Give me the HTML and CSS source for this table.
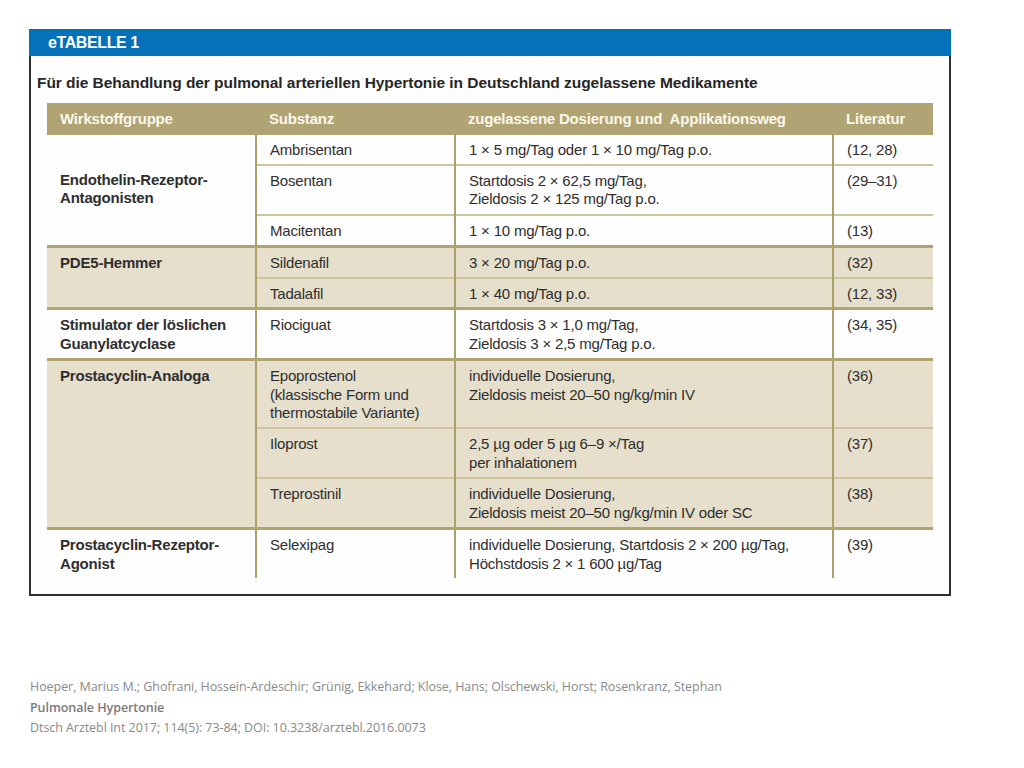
FILE: index.html
```html
<!DOCTYPE html>
<html lang="de">
<head>
<meta charset="utf-8">
<title>eTABELLE 1</title>
<link rel="stylesheet" href="styles.css">
</head>
<body>
<div class="page">
  <div class="frame">
    <div class="band">eTABELLE 1</div>
    <div class="box">
      <h1 class="title">Für die Behandlung der pulmonal arteriellen Hypertonie in Deutschland zugelassene Medikamente</h1>
      <table class="tbl">
        <colgroup>
          <col class="c1"><col class="c2"><col class="c3"><col class="c4">
        </colgroup>
        <thead>
          <tr>
            <th>Wirkstoffgruppe</th>
            <th>Substanz</th>
            <th>zugelassene Dosierung und&nbsp; Applikationsweg</th>
            <th>Literatur</th>
          </tr>
        </thead>
        <tbody class="grp white">
          <tr>
            <td class="group mid" rowspan="3">Endothelin-Rezeptor-<br>Antagonisten</td>
            <td>Ambrisentan</td>
            <td>1 × 5 mg/Tag oder 1 × 10 mg/Tag p.o.</td>
            <td>(12, 28)</td>
          </tr>
          <tr class="h2">
            <td>Bosentan</td>
            <td>Startdosis 2 × 62,5 mg/Tag,<br>Zieldosis 2 × 125 mg/Tag p.o.</td>
            <td>(29–31)</td>
          </tr>
          <tr class="loose">
            <td>Macitentan</td>
            <td>1 × 10 mg/Tag p.o.</td>
            <td>(13)</td>
          </tr>
        </tbody>
        <tbody class="grp beige">
          <tr>
            <td class="group" rowspan="2">PDE5-Hemmer</td>
            <td>Sildenafil</td>
            <td>3 × 20 mg/Tag p.o.</td>
            <td>(32)</td>
          </tr>
          <tr>
            <td>Tadalafil</td>
            <td>1 × 40 mg/Tag p.o.</td>
            <td>(12, 33)</td>
          </tr>
        </tbody>
        <tbody class="grp white">
          <tr class="h2">
            <td class="group">Stimulator der löslichen<br>Guanylatcyclase</td>
            <td>Riociguat</td>
            <td>Startdosis 3 × 1,0 mg/Tag,<br>Zieldosis 3 × 2,5 mg/Tag p.o.</td>
            <td>(34, 35)</td>
          </tr>
        </tbody>
        <tbody class="grp beige">
          <tr class="h3">
            <td class="group" rowspan="3">Prostacyclin-Analoga</td>
            <td>Epoprostenol<br>(klassische Form und<br>thermostabile Variante)</td>
            <td>individuelle Dosierung,<br>Zieldosis meist 20–50 ng/kg/min IV</td>
            <td>(36)</td>
          </tr>
          <tr class="h2">
            <td>Iloprost</td>
            <td>2,5 µg oder 5 µg 6–9 ×/Tag<br>per inhalationem</td>
            <td>(37)</td>
          </tr>
          <tr class="h2">
            <td>Treprostinil</td>
            <td>individuelle Dosierung,<br>Zieldosis meist 20–50 ng/kg/min IV oder SC</td>
            <td>(38)</td>
          </tr>
        </tbody>
        <tbody class="grp white last">
          <tr class="h2">
            <td class="group">Prostacyclin-Rezeptor-<br>Agonist</td>
            <td>Selexipag</td>
            <td>individuelle Dosierung, Startdosis 2 × 200 µg/Tag,<br>Höchstdosis 2 × 1 600 µg/Tag</td>
            <td>(39)</td>
          </tr>
        </tbody>
      </table>
    </div>
  </div>
  <div class="cite">
    <p>Hoeper, Marius M.; Ghofrani, Hossein-Ardeschir; Grünig, Ekkehard; Klose, Hans; Olschewski, Horst; Rosenkranz, Stephan</p>
    <p class="bold">Pulmonale Hypertonie</p>
    <p>Dtsch Arztebl Int 2017; 114(5): 73-84; DOI: 10.3238/arztebl.2016.0073</p>
  </div>
</div>
</body>
</html>
```

FILE: styles.css
```css
html, body {
  margin: 0;
  padding: 0;
  background: #ffffff;
}

.page {
  padding: 29px 0 0 29px;
  font-family: "Liberation Sans", Arial, sans-serif;
  color: #2e2e2e;
}

.frame {
  width: 922px;
}

.band {
  height: 27px;
  background: #0471b9;
  color: #ffffff;
  font-weight: bold;
  font-size: 16px;
  line-height: 28px;
  padding-left: 19px;
  letter-spacing: -0.4px;
}

.box {
  border: 2px solid #2e2e2e;
  border-top: none;
  padding: 0 16px 16px 16px;
  background: #fefefe;
}

.title {
  margin: 0 0 0 -10px;
  padding: 17px 0 10px 0;
  font-size: 15.5px;
  line-height: 20px;
  font-weight: bold;
  color: #262626;
  letter-spacing: -0.05px;
}

.tbl {
  width: 886px;
  border-collapse: collapse;
  table-layout: fixed;
  font-size: 15px;
  letter-spacing: -0.2px;
}

.c1 { width: 209px; }
.c2 { width: 199px; }
.c3 { width: 378px; }
.c4 { width: 100px; }

.tbl th {
  background: #b1a474;
  color: #fbf7ea;
  font-weight: bold;
  text-align: left;
  height: 32px;
  padding: 0 13px;
  line-height: 18px;
  vertical-align: middle;
  white-space: nowrap;
}

.tbl td {
  padding: 6px 13px 4px 13px;
  line-height: 18.5px;
  vertical-align: top;
  border-top: 2px solid #cdc39c;
  border-left: 2px solid #aca06a;
  white-space: nowrap;
}

.tbl tr.loose td { padding-bottom: 5px; }
.tbl tr.h2 td { padding-bottom: 5px; }
.tbl tr.h3 td { padding-bottom: 4.5px; }

.tbl td.group {
  font-weight: bold;
  border-left: none;
}

.tbl td.group.mid {
  vertical-align: middle;
  padding-bottom: 8px;
}

.tbl tbody.grp > tr:first-child > td {
  border-top: 3px solid #b0a471;
}

.tbl thead + tbody.grp > tr:first-child > td {
  border-top: none;
}

.tbl tbody.beige td {
  background: #e5dfcc;
}

.tbl tbody.white td {
  background: #fefefe;
}

.cite {
  margin-top: 81px;
  margin-left: 1px;
  font-family: "Open Sans", "Liberation Sans", sans-serif;
  font-size: 12.5px;
  color: #8a8a8a;
  letter-spacing: -0.06px;
}

.cite p {
  margin: 0;
  line-height: 20.5px;
}

.cite .bold {
  font-weight: 600;
  color: #7a7a7a;
}
```
